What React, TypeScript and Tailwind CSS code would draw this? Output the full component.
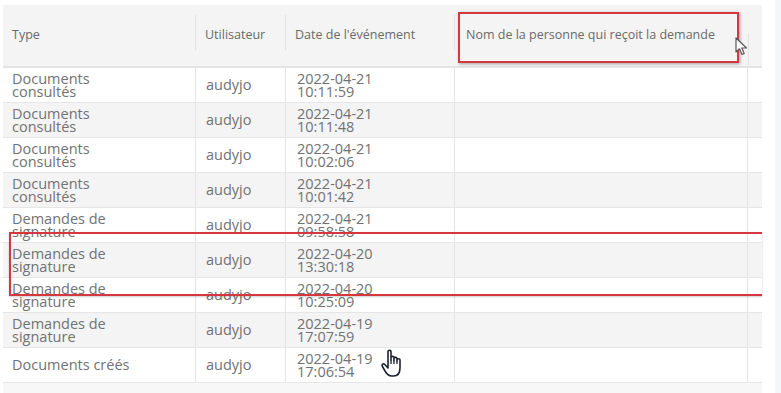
import React from 'react';

type Row = { type: string[]; user: string; date: string; time: string };

const rows: Row[] = [
  { type: ['Documents', 'consultés'], user: 'audyjo', date: '2022-04-21', time: '10:11:59' },
  { type: ['Documents', 'consultés'], user: 'audyjo', date: '2022-04-21', time: '10:11:48' },
  { type: ['Documents', 'consultés'], user: 'audyjo', date: '2022-04-21', time: '10:02:06' },
  { type: ['Documents', 'consultés'], user: 'audyjo', date: '2022-04-21', time: '10:01:42' },
  { type: ['Demandes de', 'signature'], user: 'audyjo', date: '2022-04-21', time: '09:58:58' },
  { type: ['Demandes de', 'signature'], user: 'audyjo', date: '2022-04-20', time: '13:30:18' },
  { type: ['Demandes de', 'signature'], user: 'audyjo', date: '2022-04-20', time: '10:25:09' },
  { type: ['Demandes de', 'signature'], user: 'audyjo', date: '2022-04-19', time: '17:07:59' },
  { type: ['Documents créés'], user: 'audyjo', date: '2022-04-19', time: '17:06:54' },
];

const cols = 'grid grid-cols-[193px_90px_169px_293px_13px]';

function HeaderCell({ label, divider }: { label: string; divider?: boolean }) {
  return (
    <div className="relative flex items-center pl-[9px] pr-2">
      {divider && <div className="absolute right-0 top-[10px] h-[35px] w-px bg-[#e2e2e2]" />}
      <span>{label}</span>
    </div>
  );
}

function ArrowCursor() {
  return (
    <svg width="14" height="20" viewBox="0 0 14 20" className="absolute left-[735px] top-[37px]">
      <path d="M1 1 L1 15 L4.5 11.8 L7 17.5 L9.2 16.5 L6.8 11 L11.5 11 Z" fill="#fff" stroke="#555" strokeWidth="1.2" strokeLinejoin="round" />
    </svg>
  );
}

function HandCursor() {
  return (
    <svg width="26" height="34" viewBox="0 0 26 34" className="absolute left-[380px] top-[347px]">
      <path
        d="M8 17 V4.5 C8 2.8 11 2.8 11 4.5 V13 V10.5 C11 9 14 9 14 10.5 V13.5 V11.5 C14 10 17 10 17 11.5 V14 V12.8 C17 11.3 20 11.3 20 12.8 V21 C20 26 17.5 29 13.5 29 H11.5 C8.5 29 6.8 27 5 24 L2.2 19 C1.4 17.5 3.4 16.2 4.6 17.3 L8 21 Z"
        fill="#fff"
        stroke="#1e2230"
        strokeWidth="1.6"
        strokeLinejoin="round"
      />
      <path d="M11 13 V17 M14 13.5 V17 M17 14 V17" stroke="#1e2230" strokeWidth="1.3" />
    </svg>
  );
}

export default function App() {
  return (
    <div className="relative h-[393px] w-[781px] overflow-hidden bg-white font-['Open_Sans',sans-serif] text-[#727272]">
      <div className="flex h-full">
        <div className="ml-[3px] mt-[5px] flex w-[759px] flex-col">
          {/* header */}
          <div className={`${cols} h-[63px] border-b-2 border-[#e4e4e4] bg-[#f4f4f4] text-[12.5px] text-[#6a6a6a]`}>
            <HeaderCell label="Type" divider />
            <HeaderCell label="Utilisateur" divider />
            <HeaderCell label="Date de l'événement" divider />
            <div className="flex items-center pl-[11px] pr-2">
              <span>Nom de la personne qui reçoit la demande</span>
            </div>
            <div className="relative">
              <div className="absolute left-0 top-[28px] h-[35px] w-px bg-[#e2e2e2]" />
            </div>
          </div>

          {/* body */}
          {rows.map((r, i) => (
            <div
              key={i}
              className={`${cols} h-[35px] border-b border-[#e6e6e6] text-[14.5px] leading-[13.5px] ${i % 2 === 1 ? 'bg-[#f4f4f4]' : 'bg-white'}`}
            >
              <div className="flex flex-col justify-center border-r border-[#e4e4e4] pl-[9px]">
                {r.type.map((t) => (
                  <span key={t}>{t}</span>
                ))}
              </div>
              <div className="flex items-center border-r border-[#e4e4e4] pl-[10px]">{r.user}</div>
              <div className="flex flex-col justify-center border-r border-[#e4e4e4] pl-[11px]">
                <span>{r.date}</span>
                <span>{r.time}</span>
              </div>
              <div className="border-r border-[#e4e4e4]" />
              <div />
            </div>
          ))}
          <div className="flex-1 bg-[#f7f7f7]" />
        </div>
        <div className="ml-[13px] flex-1 bg-[#f5f6f8]" />
      </div>

      {/* annotation overlays */}
      <div className="absolute left-[458px] top-[12px] h-[51px] w-[281px] border-2 border-[#d6363d] shadow-[1px_1px_3px_rgba(0,0,0,0.35)]" />
      <div className="absolute left-[9px] top-[232px] h-[64px] w-[753px] border-y-2 border-l-2 border-[#d6363d] shadow-[0_1px_2px_rgba(0,0,0,0.2)]" />
      <ArrowCursor />
      <HandCursor />
    </div>
  );
}
